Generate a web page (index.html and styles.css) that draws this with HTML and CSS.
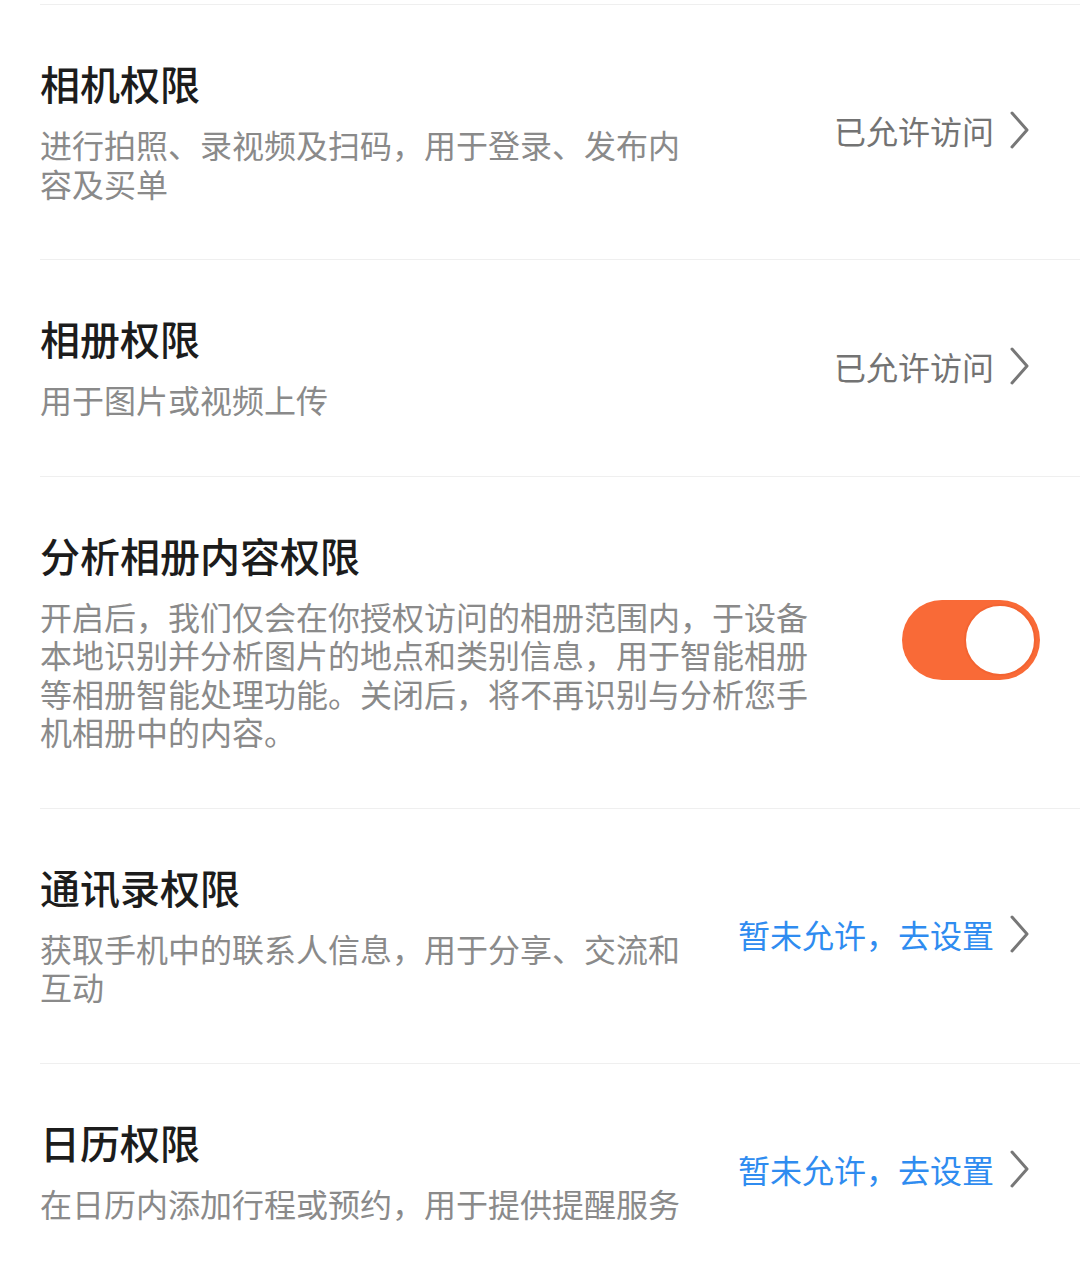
FILE: index.html
```html
<!DOCTYPE html>
<html lang="zh-CN">
<head>
  <meta charset="UTF-8" />
  <title>权限设置</title>
  <link rel="stylesheet" href="styles.css">
</head>
<body>
  <div class="permission-list">
    <div class="permission-item">
      <div class="info">
        <h3>相机权限</h3>
        <p>进行拍照、录视频及扫码，用于登录、发布内容及买单</p>
      </div>
      <div class="status">
        <span>已允许访问</span>
        <svg class="arrow" width="20" height="38" viewBox="0 0 20 38"><polyline points="2,2 17,19 2,36" /></svg>
      </div>
    </div>

    <div class="permission-item">
      <div class="info">
        <h3>相册权限</h3>
        <p>用于图片或视频上传</p>
      </div>
      <div class="status">
        <span>已允许访问</span>
        <svg class="arrow" width="20" height="38" viewBox="0 0 20 38"><polyline points="2,2 17,19 2,36" /></svg>
      </div>
    </div>

    <div class="permission-item toggle-row">
      <div class="info">
        <h3>分析相册内容权限</h3>
        <p>开启后，我们仅会在你授权访问的相册范围内，于设备本地识别并分析图片的地点和类别信息，用于智能相册等相册智能处理功能。关闭后，将不再识别与分析您手机相册中的内容。</p>
      </div>
      <div class="switch on">
        <div class="knob"></div>
      </div>
    </div>

    <div class="permission-item">
      <div class="info">
        <h3>通讯录权限</h3>
        <p>获取手机中的联系人信息，用于分享、交流和互动</p>
      </div>
      <div class="status">
        <span class="link">暂未允许，去设置</span>
        <svg class="arrow" width="20" height="38" viewBox="0 0 20 38"><polyline points="2,2 17,19 2,36" /></svg>
      </div>
    </div>

    <div class="permission-item">
      <div class="info">
        <h3>日历权限</h3>
        <p>在日历内添加行程或预约，用于提供提醒服务</p>
      </div>
      <div class="status">
        <span class="link">暂未允许，去设置</span>
        <svg class="arrow" width="20" height="38" viewBox="0 0 20 38"><polyline points="2,2 17,19 2,36" /></svg>
      </div>
    </div>
  </div>
</body>
</html>
```

FILE: styles.css
```css
body {
  margin: 0;
  background: #fff;
  font-family: "Noto Sans CJK SC", "Noto Sans", sans-serif;
}

.permission-list {
  padding-top: 4px;
  padding-left: 40px;
}

.permission-item {
  display: flex;
  align-items: center;
  justify-content: space-between;
  padding: 53px 40px 57px 0;
  border-top: 1px solid #efefef;
}

.info {
  max-width: 660px;
}

.toggle-row .info {
  max-width: 780px;
}

.info h3 {
  margin: 0 0 17px;
  font-size: 40px;
  line-height: 50px;
  font-weight: 500;
  color: #1c1c1c;
}

.info p {
  margin: 0;
  font-size: 32px;
  line-height: 38.5px;
  color: #8a8a8a;
}

.status {
  display: flex;
  align-items: center;
  gap: 16px;
  margin-right: 10px;
  font-size: 32px;
  color: #737373;
}

.status .link {
  color: #2f8cf0;
}

.arrow polyline {
  fill: none;
  stroke: #777;
  stroke-width: 3;
  stroke-linecap: round;
  stroke-linejoin: round;
}

.switch {
  width: 138px;
  height: 80px;
  box-sizing: border-box;
  padding: 4px;
  border-radius: 40px;
  background: #f96a37;
  display: flex;
  align-items: center;
  justify-content: flex-end;
}

.knob {
  width: 72px;
  height: 72px;
  box-sizing: border-box;
  border-radius: 50%;
  background: #fff;
  border: 2px solid #f36432;
}
```
